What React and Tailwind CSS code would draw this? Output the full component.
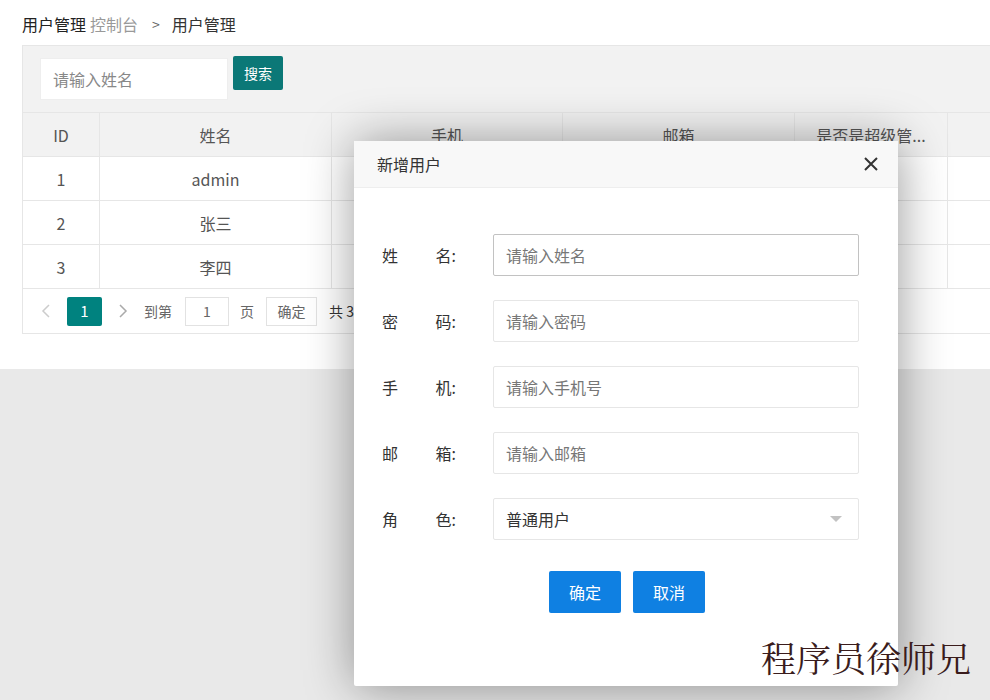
import React from "react";

const font = { fontFamily: "'Noto Sans CJK SC', 'Noto Sans', sans-serif" };

function Row({ id, name }) {
  return (
    <div className="flex h-[44px] border-t border-[#e6e6e6] bg-white text-[16px] text-[#555]">
      <div className="w-[77px] flex items-center justify-center border-r border-[#e6e6e6]">{id}</div>
      <div className="w-[232px] flex items-center justify-center border-r border-[#e6e6e6]">{name}</div>
      <div className="w-[231px] border-r border-[#e6e6e6]"></div>
      <div className="w-[232px] border-r border-[#e6e6e6]"></div>
      <div className="w-[153px] border-r border-[#e6e6e6]"></div>
      <div className="flex-1"></div>
    </div>
  );
}

function Field({ a, b, placeholder, focus, select }) {
  return (
    <div className="flex items-center h-[42px]">
      <div className="w-[74px] flex justify-between text-[16px] text-[#333]">
        <span>{a}</span>
        <span>{b}:</span>
      </div>
      <div
        className={`ml-[37px] w-[366px] h-[42px] flex items-center justify-between px-[12px] border rounded-[2px] bg-white text-[16px] ${
          focus ? "border-[#c2c2c2]" : "border-[#e6e6e6]"
        } ${select ? "text-[#333]" : "text-[#777]"}`}
      >
        <span>{placeholder}</span>
        {select && (
          <span className="w-0 h-0 mr-[4px] border-x-[6px] border-t-[6px] border-x-transparent border-t-[#c2c2c2]"></span>
        )}
      </div>
    </div>
  );
}

export default function App() {
  return (
    <div className="relative w-[990px] h-[700px] overflow-hidden bg-[#e9e9e9]" style={font}>
      {/* Page content */}
      <div className="h-[369px] bg-white pl-[22px] pt-[13px]">
        <div className="flex items-center h-[22px] text-[16px]">
          <span className="text-[#222]">用户管理</span>
          <span className="ml-[4px] text-[#999]">控制台</span>
          <span className="ml-[14px] text-[#666] text-[14px]">&gt;</span>
          <span className="ml-[12px] text-[#333]">用户管理</span>
        </div>
        <div className="mt-[10px] border border-[#e6e6e6] border-r-0">
          <div className="h-[66px] bg-[#f2f2f2] flex items-start pl-[17px] pt-[12px]">
            <div className="w-[188px] h-[42px] bg-white border border-[#eee] flex items-center pl-[12px] text-[16px] text-[#888]">
              请输入姓名
            </div>
            <div className="ml-[5px] -mt-[2px] w-[50px] h-[34px] bg-[#0b7877] rounded-[2px] flex items-center justify-center text-[14px] text-white">
              搜索
            </div>
          </div>
          <div className="flex h-[44px] border-t border-[#e6e6e6] bg-[#f2f2f2] text-[16px] text-[#555]">
            <div className="w-[77px] flex items-center justify-center border-r border-[#e6e6e6]">ID</div>
            <div className="w-[232px] flex items-center justify-center border-r border-[#e6e6e6]">姓名</div>
            <div className="w-[231px] flex items-center justify-center border-r border-[#e6e6e6]">手机</div>
            <div className="w-[232px] flex items-center justify-center border-r border-[#e6e6e6]">邮箱</div>
            <div className="w-[153px] flex items-center justify-center border-r border-[#e6e6e6]">是否是超级管...</div>
            <div className="flex-1"></div>
          </div>
          <Row id="1" name="admin" />
          <Row id="2" name="张三" />
          <Row id="3" name="李四" />
          <div className="h-[45px] border-t border-[#e6e6e6] bg-white flex items-center pl-[17px] text-[14px] text-[#666]">
            <svg width="12" height="16" viewBox="0 0 12 16" className="text-[#ccc]">
              <path d="M9 2 L3 8 L9 14" fill="none" stroke="currentColor" strokeWidth="1.5" />
            </svg>
            <div className="ml-[15px] w-[35px] h-[29px] bg-[#00827f] rounded-[2px] text-white flex items-center justify-center text-[15px]">
              1
            </div>
            <svg width="12" height="16" viewBox="0 0 12 16" className="ml-[15px] text-[#aaa]">
              <path d="M3 2 L9 8 L3 14" fill="none" stroke="currentColor" strokeWidth="1.5" />
            </svg>
            <span className="ml-[15px]">到第</span>
            <div className="ml-[13px] w-[44px] h-[29px] border border-[#e2e2e2] flex items-center justify-center">1</div>
            <span className="ml-[11px]">页</span>
            <div className="ml-[12px] w-[51px] h-[29px] border border-[#e2e2e2] flex items-center justify-center">确定</div>
            <span className="ml-[12px] text-[#333]">共 3 条</span>
          </div>
        </div>
      </div>

      {/* Modal */}
      <div className="absolute left-[354px] top-[141px] w-[544px] h-[545px] bg-white rounded-[2px] shadow-[1px_1px_50px_rgba(0,0,0,0.4)]">
        <div className="h-[47px] bg-[#f8f8f8] border-b border-[#eee] flex items-center justify-between pl-[23px] pr-[20px]">
          <span className="text-[16px] text-[#333]">新增用户</span>
          <svg width="14" height="14" viewBox="0 0 14 14">
            <path d="M1 1 L13 13 M13 1 L1 13" stroke="#333" strokeWidth="2" />
          </svg>
        </div>
        <div className="pl-[28px] pt-[46px] flex flex-col gap-[24px]">
          <Field a="姓" b="名" placeholder="请输入姓名" focus />
          <Field a="密" b="码" placeholder="请输入密码" />
          <Field a="手" b="机" placeholder="请输入手机号" />
          <Field a="邮" b="箱" placeholder="请输入邮箱" />
          <Field a="角" b="色" placeholder="普通用户" select />
        </div>
        <div className="mt-[31px] flex justify-center gap-[12px] pl-[2px]">
          <div className="w-[72px] h-[42px] bg-[#0f80e2] rounded-[2px] text-white text-[16px] flex items-center justify-center">
            确定
          </div>
          <div className="w-[72px] h-[42px] bg-[#0f80e2] rounded-[2px] text-white text-[16px] flex items-center justify-center">
            取消
          </div>
        </div>
      </div>

      {/* Watermark */}
      <div
        className="absolute left-[761px] top-[634px] text-[35px] leading-[46px] text-[#3a1c1c]"
        style={{ fontFamily: "'Noto Serif CJK SC', 'Noto Sans CJK SC', serif" }}
      >
        程序员徐师兄
      </div>
    </div>
  );
}
